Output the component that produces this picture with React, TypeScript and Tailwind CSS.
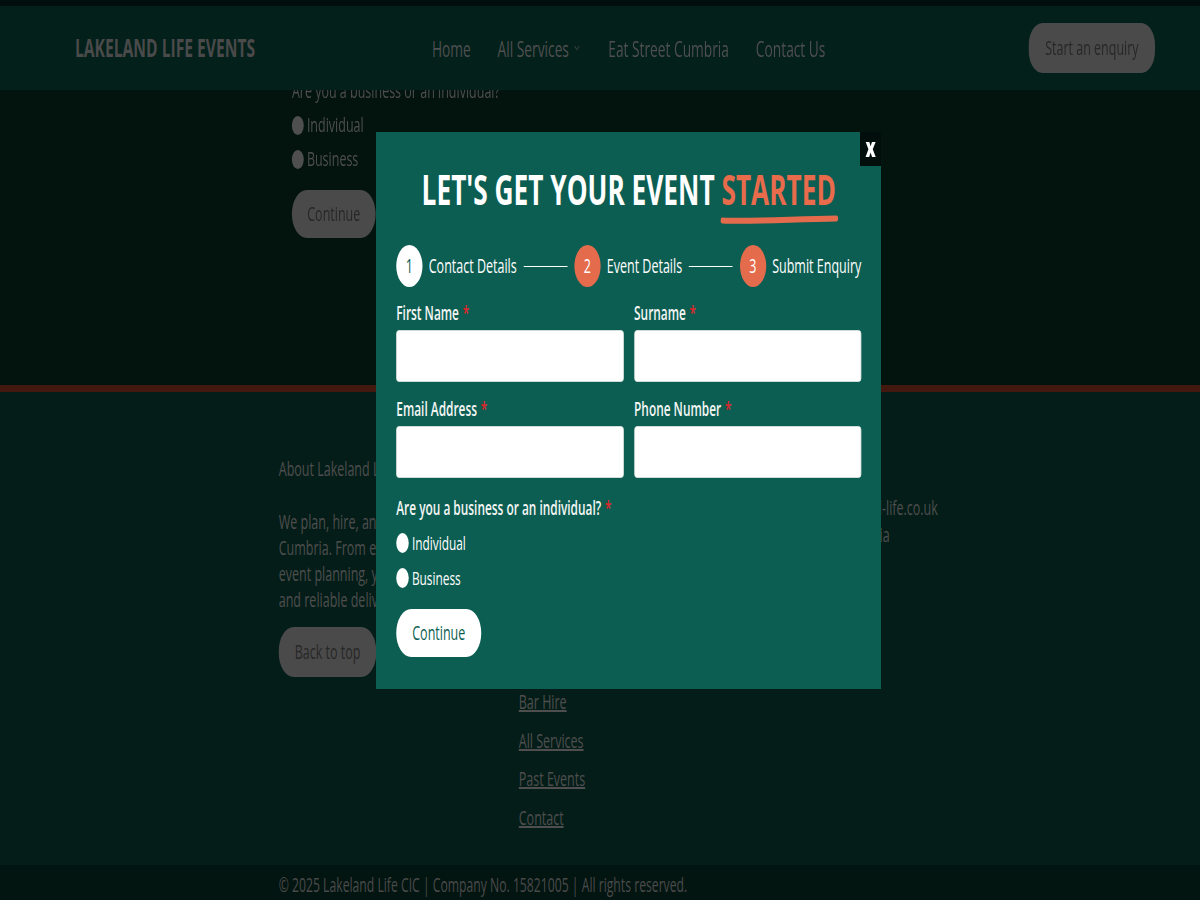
import { ChevronDown } from 'lucide-react';

const footerLinks = [
  'Home',
  'Event Planning',
  'Marquee Hire',
  'Equipment Hire',
  'Catering',
  'Bar Hire',
  'All Services',
  'Past Events',
  'Contact',
];

function Req() {
  return <span className="text-[#e0262b] ml-[6px]">*</span>;
}

function Field({ label }: { label: string }) {
  return (
    <div className="flex flex-col gap-[4px]">
      <label className="text-[19px] leading-[26px] font-semibold text-[#f3f6f4]">
        {label}
        <Req />
      </label>
      <input className="h-[52px] w-full bg-white rounded-[4px] border border-[#dfe6e3] outline-none" />
    </div>
  );
}

function Step({ n, label, active }: { n: number; label: string; active?: boolean }) {
  return (
    <div className="flex items-center gap-[10px]">
      <span
        className={
          active
            ? 'w-[42px] h-[42px] rounded-full bg-white text-[#0c5e52] flex items-center justify-center text-[20px]'
            : 'w-[42px] h-[42px] rounded-full bg-[#e56b4d] text-white flex items-center justify-center text-[20px]'
        }
      >
        {n}
      </span>
      <span className="text-[20px] text-white whitespace-nowrap">{label}</span>
    </div>
  );
}

function Radio({ label, dim }: { label: string; dim?: boolean }) {
  return (
    <label className="flex items-center gap-[5px] h-[26px]">
      <span className={dim ? 'w-[19px] h-[19px] rounded-full bg-[#4f4f4f]' : 'w-[20px] h-[20px] rounded-full bg-white'} />
      <span className={dim ? 'text-[20px] text-[#4e4e4e]' : 'text-[19px] text-white'}>{label}</span>
    </label>
  );
}

function EnquiryModal() {
  return (
    <div className="absolute left-[602px] top-[132px] w-[808px] bg-[#0c5e52] px-[32px] pt-[32px] pb-[32px]">
      <button className="absolute right-0 top-0 w-[34px] h-[34px] bg-[#020e0b] text-white text-[26px] font-extrabold leading-none flex items-center justify-center pb-[4px]">
        x
      </button>
      <h2 className="text-center text-[42px] leading-[50px] font-bold text-white">
        LET'S GET YOUR EVENT{' '}
        <span className="relative text-[#e86b4c]">
          STARTED
          <svg
            className="absolute left-[-2px] right-[-4px] top-[55px] h-[10px]"
            viewBox="0 0 190 10"
            preserveAspectRatio="none"
            fill="none"
          >
            <path d="M4 5.5 C 50 7, 120 4, 186 3.5" stroke="#e56b4d" strokeWidth="6" strokeLinecap="round" />
          </svg>
        </span>
      </h2>

      <div className="mt-[31px] flex items-center justify-between">
        <Step n={1} label="Contact Details" active />
        <span className="w-[70px] h-[1px] bg-white" />
        <Step n={2} label="Event Details" />
        <span className="w-[70px] h-[1px] bg-white" />
        <Step n={3} label="Submit Enquiry" />
      </div>

      <div className="mt-[13px] grid grid-cols-2 gap-x-[17px] gap-y-[14px]">
        <Field label="First Name" />
        <Field label="Surname" />
        <Field label="Email Address" />
        <Field label="Phone Number" />
      </div>

      <p className="mt-[17px] text-[19px] leading-[26px] font-semibold text-[#f3f6f4]">
        Are you a business or an individual?
        <Req />
      </p>
      <div className="mt-[9px] flex flex-col gap-[9px]">
        <Radio label="Individual" />
        <Radio label="Business" />
      </div>
      <button className="mt-[18px] w-[136px] h-[48px] rounded-full bg-white text-[#0c5e52] text-[20px]">
        Continue
      </button>
    </div>
  );
}

export default function App() {
  return (
    <div className="w-[1200px] h-[900px] overflow-hidden bg-[#03140f]">
      <div className="relative w-[1920px] h-[900px] origin-top-left scale-x-[0.625] font-['Open_Sans',sans-serif] flex flex-col">
        <div className="h-[6px] bg-[#020e0b]" />
        <header className="h-[84px] bg-[#03201b] grid grid-cols-[571px_1fr_auto] items-center pl-[120px] pr-[72px]">
          <div className="text-[25px] font-bold text-[#4a4a4a]">LAKELAND LIFE EVENTS</div>
          <nav className="flex items-center gap-[43px] text-[22px] text-[#4f4f4f]">
            <a>Home</a>
            <a className="flex items-center gap-[6px]">
              All Services
              <ChevronDown size={14} strokeWidth={1.5} />
            </a>
            <a>Eat Street Cumbria</a>
            <a>Contact Us</a>
          </nav>
          <button className="w-[202px] h-[50px] rounded-[22px] bg-[#4a4a4a] text-[#272727] text-[20px]">
            Start an enquiry
          </button>
        </header>

        <section className="h-[295px] overflow-hidden pl-[467px]">
          <p className="-mt-[12px] text-[20px] leading-[26px] text-[#4e4e4e]">Are you a business or an individual?</p>
          <div className="mt-[8px] flex flex-col gap-[8px]">
            <Radio label="Individual" dim />
            <Radio label="Business" dim />
          </div>
          <button className="mt-[18px] w-[134px] h-[48px] rounded-[24px] bg-[#4a4a4a] text-[#272727] text-[20px]">
            Continue
          </button>
        </section>

        <div className="h-[7px] bg-[#43190f]" />

        <footer className="h-[473px] bg-[#041d18] pl-[446px] pt-[64px] grid grid-cols-[384px_439px_384px] text-[20px] text-[#4e4e4e]">
          <div>
            <h4 className="leading-[26px]">About Lakeland Life</h4>
            <p className="mt-[27px] leading-[26px]">
              <span className="block whitespace-nowrap">We plan, hire, and deliver events across</span>
              <span className="block whitespace-nowrap">Cumbria. From equipment hire to full</span>
              <span className="block whitespace-nowrap">event planning, you can count on friendly</span>
              <span className="block whitespace-nowrap">and reliable delivery.</span>
            </p>
            <button className="mt-[14px] w-[156px] h-[50px] rounded-[24px] bg-[#4a4a4a] text-[#272727] text-[20px]">
              Back to top
            </button>
          </div>
          <div>
            <h4 className="leading-[26px]">Quick Links</h4>
            <ul className="mt-[13px] flex flex-col gap-[12.75px]">
              {footerLinks.map((l) => (
                <li key={l} className="leading-[26px]">
                  <a className="underline">{l}</a>
                </li>
              ))}
            </ul>
          </div>
          <div>
            <h4 className="leading-[26px]">Get in Touch</h4>
            <p className="mt-[13px] leading-[26px]">hello@lakeland-life.co.uk</p>
            <p className="mt-[1px] leading-[26px]">Kendal, Cumbria</p>
          </div>
        </footer>

        <div className="flex-1 bg-[#031511] pl-[446px] pt-[5px] flex items-center">
          <p className="text-[19.5px] text-[#4a4a4a]">© 2025 Lakeland Life CIC | Company No. 15821005 | All rights reserved.</p>
        </div>

        <EnquiryModal />
      </div>
    </div>
  );
}
